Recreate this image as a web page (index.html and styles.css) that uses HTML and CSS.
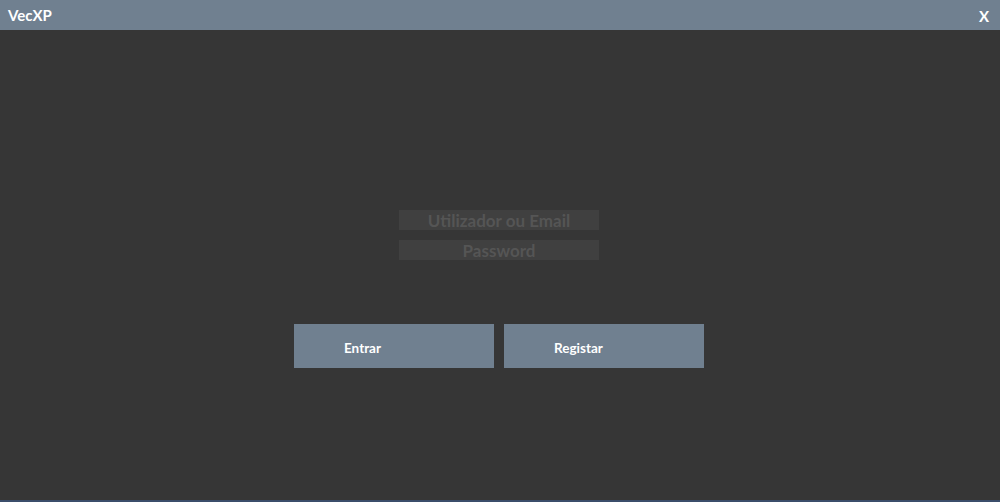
FILE: index.html
```html
<!DOCTYPE html>
<html>
<head>
<meta charset="utf-8">
<link rel="stylesheet" href="styles.css">
</head>
<body>
<div class="window">
  <div class="titlebar">
    <span class="title">VecXP</span>
    <span class="close">X</span>
  </div>
  <div class="content">
    <div class="fields">
      <input class="field" type="text" placeholder="Utilizador ou Email">
      <input class="field" type="password" placeholder="Password">
    </div>
    <div class="buttons">
      <button class="btn">Entrar</button>
      <button class="btn">Registar</button>
    </div>
  </div>
</div>
</body>
</html>
```

FILE: styles.css
```css
html, body {
  margin: 0;
  padding: 0;
  background: #363636;
}
.window {
  width: 1000px;
  height: 502px;
  display: flex;
  flex-direction: column;
  font-family: "Lato", "Open Sans", sans-serif;
}
.titlebar {
  height: 30px;
  background: #708090;
  display: flex;
  align-items: center;
  justify-content: space-between;
  padding: 0 11px 0 8px;
  color: #ffffff;
  font-weight: 700;
}
.title {
  font-size: 15px;
}
.close {
  font-size: 15px;
  margin-top: 2px;
}
.content {
  flex: 1;
  background: #363636;
  border-bottom: 2px solid #3b4d6b;
  display: flex;
  flex-direction: column;
  align-items: center;
  padding-top: 180px;
  padding-right: 2px;
  box-sizing: border-box;
}
.fields {
  display: flex;
  flex-direction: column;
  gap: 10px;
}
.field {
  width: 200px;
  height: 20px;
  box-sizing: border-box;
  border: none;
  outline: none;
  background: #404040;
  padding: 0;
  text-align: center;
  font-family: "Lato", "Open Sans", sans-serif;
  font-weight: 700;
  font-size: 17px;
  color: #555555;
}
.field::placeholder {
  color: #555555;
  opacity: 1;
}
.buttons {
  display: flex;
  gap: 10px;
  margin-top: 64px;
}
.btn {
  width: 200px;
  height: 44px;
  border: none;
  background: #708090;
  color: #ffffff;
  font-family: "Lato", "Open Sans", sans-serif;
  font-weight: 700;
  font-size: 13.5px;
  text-align: left;
  padding: 4px 0 0 50px;
}
```
